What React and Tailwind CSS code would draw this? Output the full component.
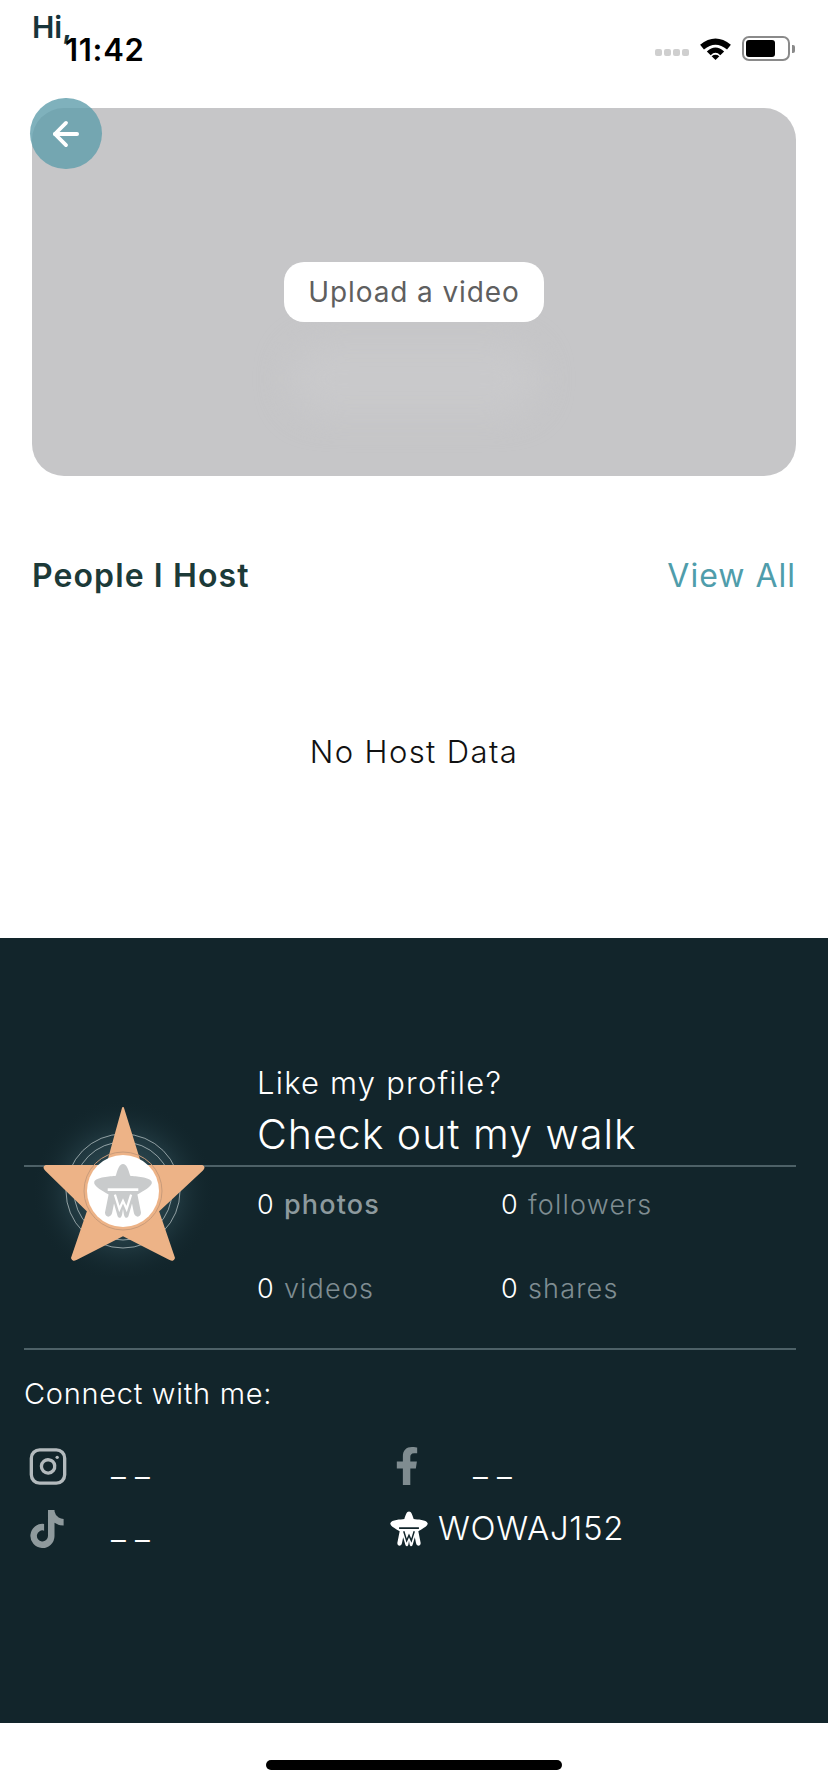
import React from 'react';
import { ArrowLeft, Instagram } from 'lucide-react';
import { FaFacebookF, FaTiktok } from 'react-icons/fa';

const MascotShape = ({ color, cut }) => (
  <>
    <path
      d="M36 6C40 6 42 12 44 19C50 20 66 20 68 26C69 31 58 36 52 40L56 60C56 66 49 66 48 60L46 50L42 64C40 67 38 66 37 62L36 56L35 62C34 66 32 67 30 64L26 50L24 60C23 66 16 66 16 60L20 40C14 36 3 31 4 26C6 20 22 20 28 19C30 12 32 6 36 6Z"
      fill={color}
    />
    <rect x="19" y="33" width="34" height="3" fill={cut} />
    <path d="M27 40l5 16 4-9 4 9 5-16" fill="none" stroke={cut} strokeWidth="2.5" />
  </>
);

const Star = () => (
  <svg viewBox="0 0 190 180" className="w-[190px] h-[180px]">
    <defs>
      <radialGradient id="glow">
        <stop offset="0%" stopColor="#6f9aa6" stopOpacity="0.5" />
        <stop offset="60%" stopColor="#3f626d" stopOpacity="0.3" />
        <stop offset="100%" stopColor="#12252b" stopOpacity="0" />
      </radialGradient>
    </defs>
    <circle cx="95" cy="95" r="92" fill="url(#glow)" />
    <g fill="none" stroke="#dfe7e8" strokeOpacity="0.6">
      <circle cx="95" cy="95" r="49" />
      <circle cx="95" cy="95" r="57" />
    </g>
    <path
      d="M95 12L113 70L174 70Q177 71 174 74L130 115L146 162Q145 165 142 163L95 139L48 163Q45 165 44 162L60 115L18 74Q15 71 18 70L79 70Z"
      fill="#edb387"
      stroke="#edb387"
      strokeLinejoin="round"
      strokeWidth="2"
    />
    <circle cx="95" cy="95" r="39" fill="none" stroke="#c99b7a" strokeWidth="1" />
    <circle cx="95" cy="95" r="36" fill="#ffffff" />
    <g transform="translate(62.6 62.6) scale(0.9)">
      <MascotShape color="#c9cbcc" cut="#ffffff" />
    </g>
  </svg>
);

const Stat = ({ value, label, bold }) => (
  <div className="flex items-center gap-[9px] h-[32px] text-[27px] tracking-[1.2px]">
    <span className="text-white font-light">{value}</span>
    <span className={bold ? 'text-[#8d9a9e] font-medium' : 'text-[#7f8d92] font-light'}>{label}</span>
  </div>
);

const Social = ({ icon, gap }) => (
  <div className="flex items-center h-[38px]">
    <div className="w-[40px] flex justify-center">{icon}</div>
    <span className={`${gap} -mt-[2px] text-white text-[33px] font-light leading-none`}>_ _</span>
  </div>
);

export default function App() {
  return (
    <div className="relative w-[828px] h-[1792px] flex flex-col bg-white font-['Inter',sans-serif] overflow-hidden">
      {/* status bar */}
      <div className="absolute top-[10px] left-[32px] text-[30px] font-semibold leading-[34px] text-[#17343a]">Hi,</div>
      <div className="absolute top-[32px] left-[65px] text-[31px] font-semibold leading-[36px] tracking-[0.7px] text-black">11:42</div>
      <div className="absolute top-[36px] right-[33px] flex items-center">
        <div className="flex gap-[2px] mt-[8px] mr-[10px]">
          <span className="w-[7px] h-[7px] rounded-[2px] bg-[#cfcfcf]" />
          <span className="w-[7px] h-[7px] rounded-[2px] bg-[#cfcfcf]" />
          <span className="w-[7px] h-[7px] rounded-[2px] bg-[#cfcfcf]" />
          <span className="w-[7px] h-[7px] rounded-[2px] bg-[#cfcfcf]" />
        </div>
        <svg viewBox="0 0 34 26" className="w-[33px] h-[25px]">
          <path d="M1 9 Q17 -4 33 9 L29 14 Q17 4 5 14 Z" fill="#000" />
          <path d="M8 16 Q17 8 26 16 L22 20 Q17 15 12 20 Z" fill="#000" />
          <path d="M13 21 Q17 18 21 21 L17 25 Z" fill="#000" />
        </svg>
        <div className="ml-[10px] w-[48px] h-[25px] rounded-[7px] border-[2px] border-[#8a8a8a] p-[2px]">
          <div className="w-[29px] h-full rounded-[3px] bg-black" />
        </div>
        <div className="ml-[2px] w-[3px] h-[8px] rounded-r-[2px] bg-[#8a8a8a]" />
      </div>

      <div className="h-[938px] px-[32px] pt-[108px]">
        {/* video card */}
        <div className="relative h-[368px] w-[764px] rounded-[32px] bg-[#c6c6c8] flex justify-center pt-[154px]">
          <div className="absolute left-1/2 top-[236px] -translate-x-1/2 w-[250px] h-[70px] rounded-full bg-[#c9c9cb] blur-[16px]" />
          <div className="relative w-[260px] h-[60px] rounded-[20px] bg-white flex items-center justify-center text-[28px] tracking-[0.9px] text-[#5f5f5f]">
            Upload a video
          </div>
          <button className="absolute -left-[2px] -top-[10px] w-[72px] h-[71px] rounded-full bg-[#5f9dab]/80 flex items-center justify-center text-white">
            <ArrowLeft size={38} strokeWidth={2.4} />
          </button>
        </div>

        <div className="flex items-center justify-between mt-[80px] h-[40px]">
          <h2 className="text-[32px] font-semibold text-[#1c3a38] tracking-[1.1px]">People I Host</h2>
          <a className="text-[32px] text-[#4f9dab] tracking-[1px]">View All</a>
        </div>
        <p className="mt-[138px] text-center text-[31px] font-light text-[#111111] tracking-[1.4px] leading-[36px]">No Host Data</p>
      </div>

      {/* footer */}
      <div className="relative h-[785px] bg-[#12252b] px-[24px] pr-[32px] pt-[126px]">
        <div className="absolute left-[28px] top-[158px]">
          <Star />
        </div>
        <div className="pl-[233px]">
          <p className="text-[31px] font-light text-white tracking-[1.2px] leading-[38px]">Like my profile?</p>
          <p className="mt-[7px] text-[41px] font-light text-white tracking-[1px] leading-[50px]">Check out my walk</p>
        </div>
        <div className="mt-[6px] h-[2px] bg-[#4d6167]" />
        <div className="pl-[233px] pt-[22px] grid grid-cols-[244px_1fr] gap-y-[52px]">
          <Stat value="0" label="photos" bold />
          <Stat value="0" label="followers" />
          <Stat value="0" label="videos" />
          <Stat value="0" label="shares" />
        </div>
        <div className="mt-[43px] h-[2px] bg-[#4d6167]" />
        <p className="mt-[26px] text-[29px] font-light text-white tracking-[0.7px] leading-[36px]">Connect with me:</p>
        <div className="mt-[35px] grid grid-cols-[360px_1fr] gap-y-[25px] pl-[4px]">
          <Social icon={<Instagram size={43} strokeWidth={2} className="text-[#b3babd]" />} gap="ml-[43px]" />
          <Social icon={<FaFacebookF size={38} className="text-[#7f8c90] -ml-[2px]" />} gap="ml-[45px]" />
          <Social icon={<FaTiktok size={38} className="text-[#8f9a9d] -ml-[3px]" />} gap="ml-[43px]" />
          <div className="flex items-center h-[38px]">
            <svg viewBox="0 0 72 72" className="w-[42px] h-[42px]">
              <MascotShape color="#ffffff" cut="#12252b" />
            </svg>
            <span className="ml-[8px] text-white text-[33px] font-light tracking-[0.7px]">WOWAJ152</span>
          </div>
        </div>
      </div>

      {/* home indicator */}
      <div className="flex-1 flex items-center justify-center pt-[14px]">
        <div className="w-[296px] h-[10px] rounded-full bg-black" />
      </div>
    </div>
  );
}
